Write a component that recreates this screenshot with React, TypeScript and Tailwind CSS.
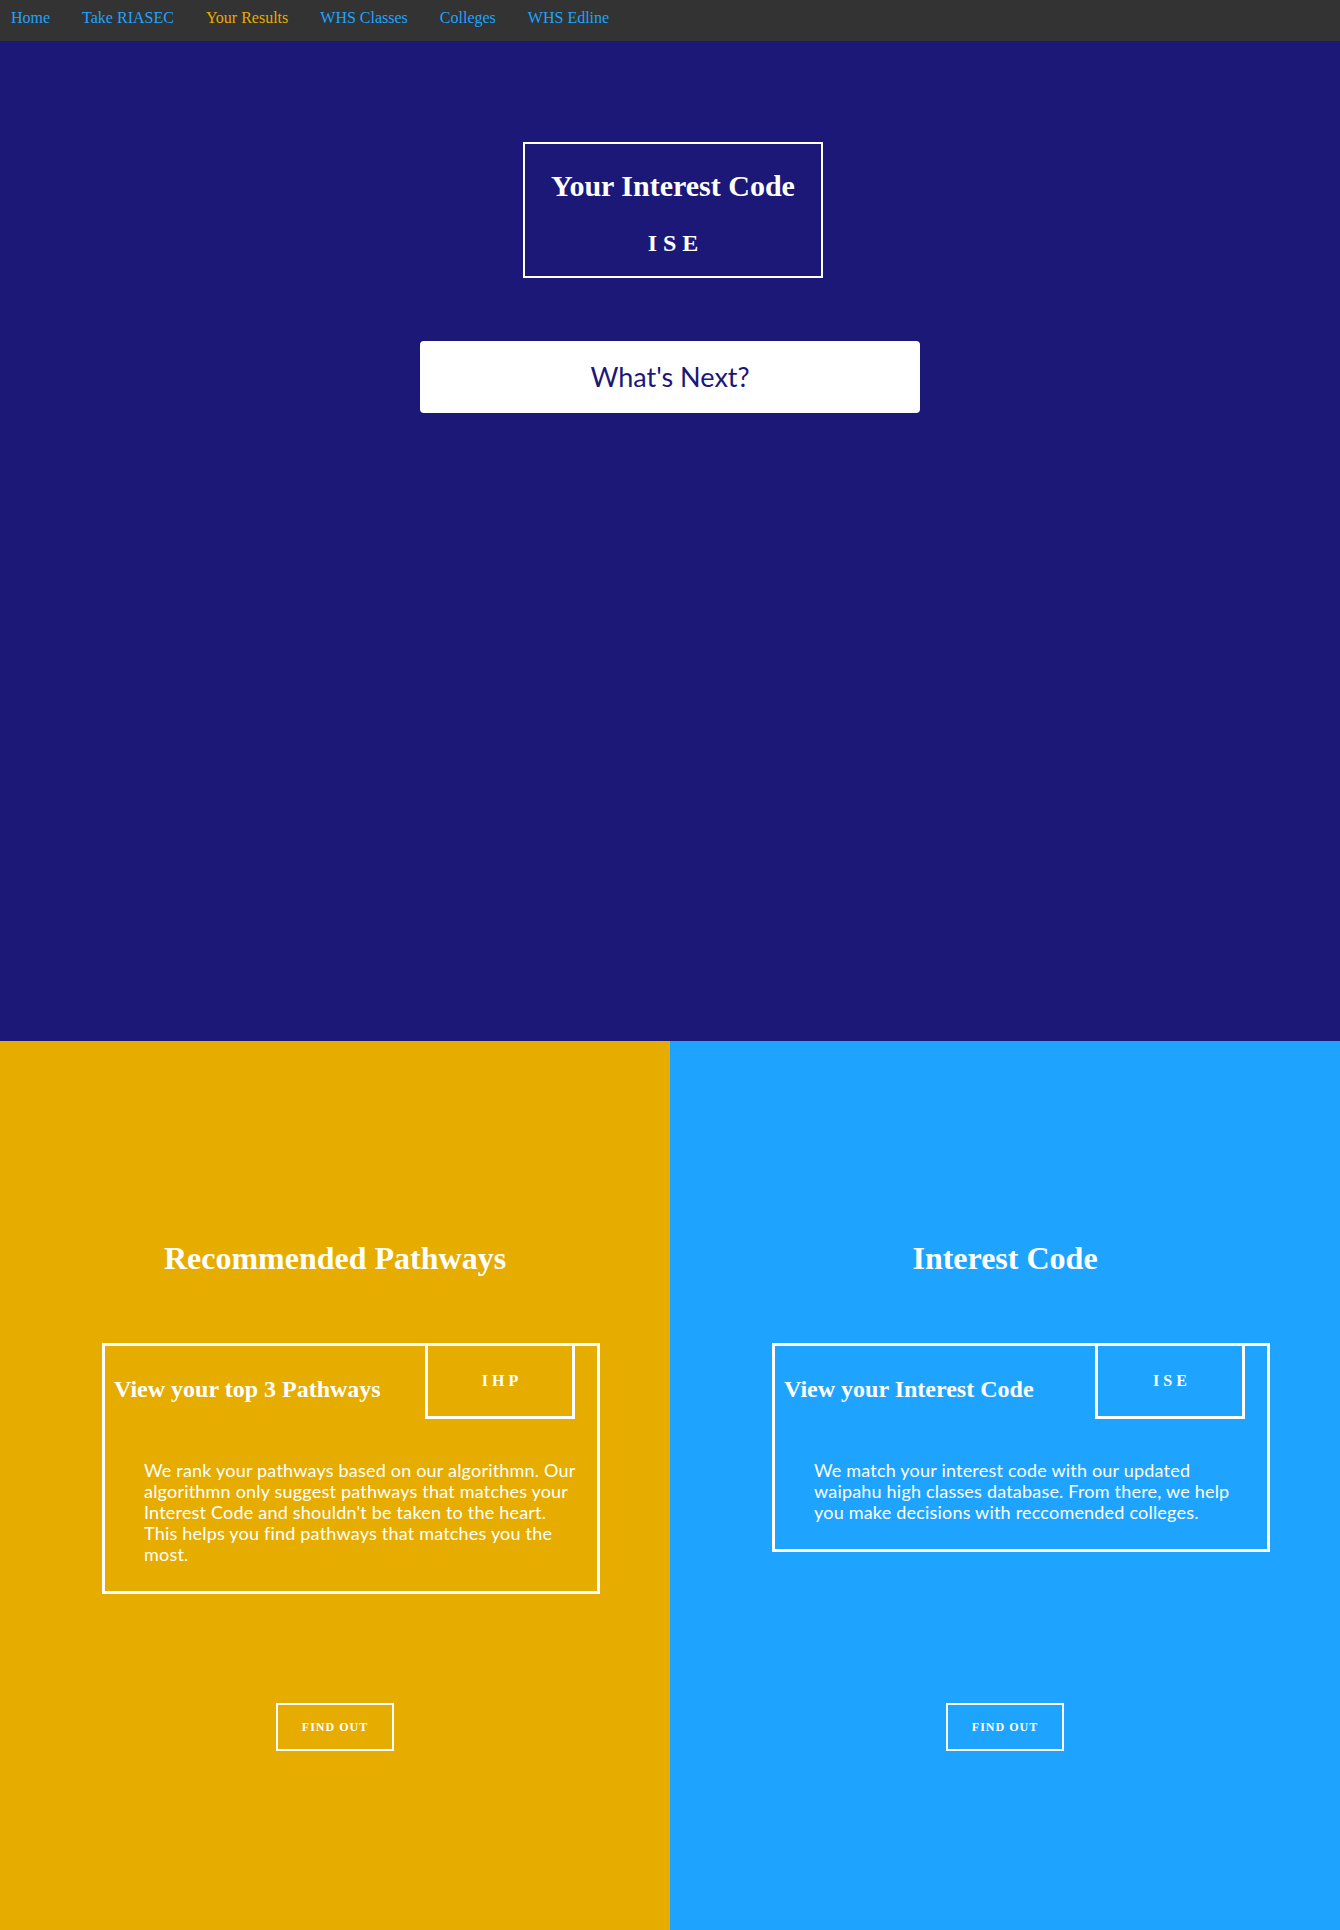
import React from "react";

const serif = { fontFamily: '"Liberation Serif", "Times New Roman", serif' };
const sans = { fontFamily: 'Lato, "DejaVu Sans", sans-serif' };

function Card({
  title,
  code,
  lines,
}: {
  title: string;
  code: string;
  lines: string[];
}) {
  return (
    <div className="ml-[102px] w-[498px] border-[3px] border-white">
      <div className="flex items-start justify-between pl-[9px] pr-[22px]">
        <h2
          className="mt-[29px] text-[24px] font-bold leading-[28px] text-white"
          style={serif}
        >
          {title}
        </h2>
        <div
          className="-mt-[3px] flex h-[76px] w-[150px] items-center justify-center border-[3px] border-white text-[16px] font-bold leading-[18px] text-white"
          style={serif}
        >
          {code}
        </div>
      </div>
      <p
        className="mb-[26px] ml-[39px] mt-[41px] text-[18px] leading-[21px] tracking-[0.2px] text-white"
        style={sans}
      >
        {lines.map((l, i) => (
          <span key={i} className="block whitespace-nowrap">
            {l}
          </span>
        ))}
      </p>
    </div>
  );
}

function Half({
  bg,
  heading,
  title,
  code,
  lines,
}: {
  bg: string;
  heading: string;
  title: string;
  code: string;
  lines: string[];
}) {
  return (
    <div className={`flex w-[670px] flex-col pt-[199px] ${bg}`}>
      <h1
        className="h-[36px] text-center text-[32px] font-bold leading-[36px] text-white"
        style={serif}
      >
        {heading}
      </h1>
      <div className="mt-[67px] h-[251px]">
        <Card title={title} code={code} lines={lines} />
      </div>
      <div className="mt-[109px] flex justify-center">
        <button
          className="flex h-[48px] w-[118px] items-center justify-center border-2 border-white text-[12px] font-bold uppercase tracking-[1px] text-white"
          style={serif}
        >
          Find Out
        </button>
      </div>
    </div>
  );
}

export default function App() {
  const links = [
    { t: "Home", active: false },
    { t: "Take RIASEC", active: false },
    { t: "Your Results", active: true },
    { t: "WHS Classes", active: false },
    { t: "Colleges", active: false },
    { t: "WHS Edline", active: false },
  ];
  return (
    <div className="w-[1340px]">
      <nav className="flex h-[41px] items-start gap-[32px] bg-[#333333] pl-[11px] pt-[9px]">
        {links.map((l) => (
          <a
            key={l.t}
            href="#"
            className={`text-[16px] leading-[18px] ${
              l.active ? "text-[#e6ac00]" : "text-[#1ea4ff]"
            }`}
            style={serif}
          >
            {l.t}
          </a>
        ))}
      </nav>
      <section className="flex h-[1000px] flex-col items-center bg-[#1b1878] pt-[101px]">
        <div className="flex w-full justify-center pl-[6px]">
          <div className="flex h-[136px] w-[300px] flex-col items-center border-2 border-white">
            <h1
              className="mt-[25px] text-[30px] font-bold leading-[34px] text-white"
              style={serif}
            >
              Your Interest Code
            </h1>
            <div
              className="mt-[26px] text-[24px] font-bold leading-[28px] text-white"
              style={serif}
            >
              I S E
            </div>
          </div>
        </div>
        <button
          className="mt-[63px] flex h-[72px] w-[500px] items-center justify-center rounded bg-white text-[27px] text-[#1b1878]"
          style={sans}
        >
          What's Next?
        </button>
      </section>
      <section className="flex h-[889px]">
        <Half
          bg="bg-[#e6ac00]"
          heading="Recommended Pathways"
          title="View your top 3 Pathways"
          code="I H P"
          lines={[
            "We rank your pathways based on our algorithmn. Our",
            "algorithmn only suggest pathways that matches your",
            "Interest Code and shouldn't be taken to the heart.",
            "This helps you find pathways that matches you the",
            "most.",
          ]}
        />
        <Half
          bg="bg-[#1ea4ff]"
          heading="Interest Code"
          title="View your Interest Code"
          code="I S E"
          lines={[
            "We match your interest code with our updated",
            "waipahu high classes database. From there, we help",
            "you make decisions with reccomended colleges.",
          ]}
        />
      </section>
    </div>
  );
}
